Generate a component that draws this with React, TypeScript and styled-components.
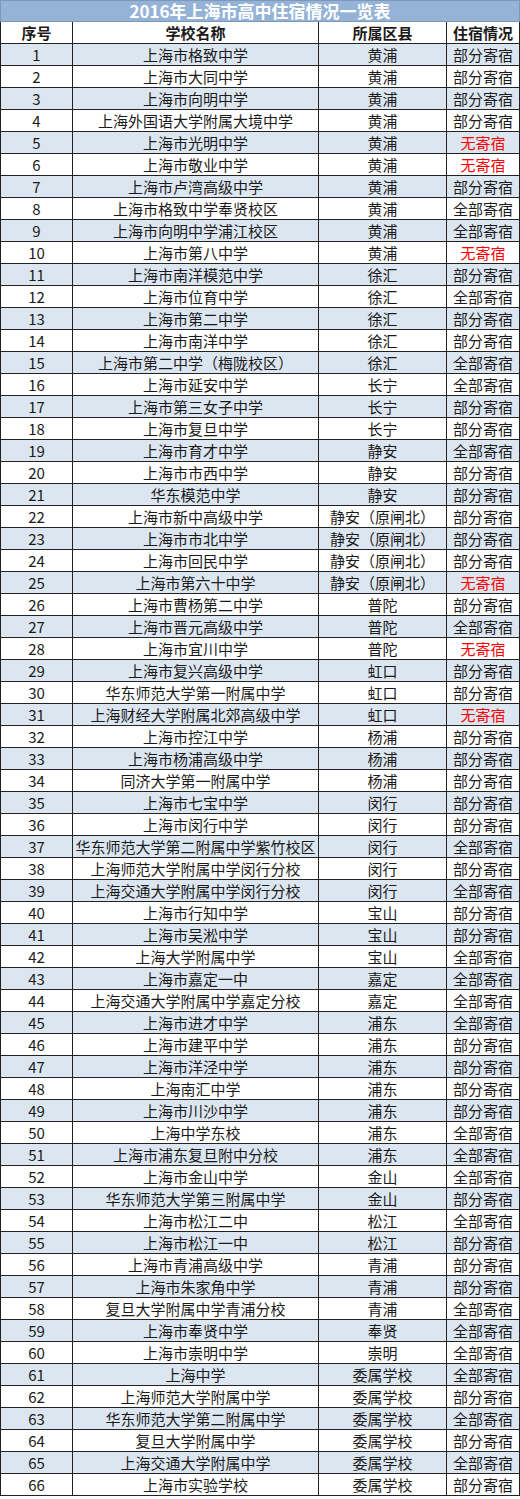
import React from "react";
import styled, { createGlobalStyle } from "styled-components";

const GlobalStyle = createGlobalStyle`
  html, body {
    margin: 0;
    padding: 0;
    background: #ffffff;
  }
  body {
    font-family: "Noto Sans CJK SC", "Noto Sans", sans-serif;
  }
`;

const Table = styled.table`
  width: 519px;
  border-collapse: collapse;
  table-layout: fixed;
  font-size: 15px;
  color: #1a1a1a;
`;

const TitleCell = styled.th`
  height: 20px;
  padding: 0;
  background: #95b3d7;
  border: 1px solid #7f98b8;
  color: #ffffff;
  font-size: 17px;
  font-weight: 700;
  line-height: 20px;
  text-align: center;
`;

const Row = styled.tr<{ $shaded?: boolean }>`
  height: 22px;
  background: ${({ $shaded }) => ($shaded ? "#dce6f1" : "#ffffff")};
`;

const HeadCell = styled.th`
  padding: 0;
  border: 1px solid #222;
  font-weight: 700;
  line-height: 20px;
  text-align: center;
  white-space: nowrap;
`;

const Cell = styled.td<{ $alert?: boolean }>`
  padding: 0;
  border: 1px solid #222;
  line-height: 20px;
  text-align: center;
  white-space: nowrap;
  overflow: hidden;
  color: ${({ $alert }) => ($alert ? "#ff0000" : "#1a1a1a")};
`;

type School = [string, string, string];

const schools: School[] = [
  ["上海市格致中学", "黄浦", "部分寄宿"],
  ["上海市大同中学", "黄浦", "部分寄宿"],
  ["上海市向明中学", "黄浦", "部分寄宿"],
  ["上海外国语大学附属大境中学", "黄浦", "部分寄宿"],
  ["上海市光明中学", "黄浦", "无寄宿"],
  ["上海市敬业中学", "黄浦", "无寄宿"],
  ["上海市卢湾高级中学", "黄浦", "部分寄宿"],
  ["上海市格致中学奉贤校区", "黄浦", "全部寄宿"],
  ["上海市向明中学浦江校区", "黄浦", "全部寄宿"],
  ["上海市第八中学", "黄浦", "无寄宿"],
  ["上海市南洋模范中学", "徐汇", "部分寄宿"],
  ["上海市位育中学", "徐汇", "全部寄宿"],
  ["上海市第二中学", "徐汇", "部分寄宿"],
  ["上海市南洋中学", "徐汇", "部分寄宿"],
  ["上海市第二中学（梅陇校区）", "徐汇", "全部寄宿"],
  ["上海市延安中学", "长宁", "全部寄宿"],
  ["上海市第三女子中学", "长宁", "部分寄宿"],
  ["上海市复旦中学", "长宁", "部分寄宿"],
  ["上海市育才中学", "静安", "全部寄宿"],
  ["上海市市西中学", "静安", "部分寄宿"],
  ["华东模范中学", "静安", "部分寄宿"],
  ["上海市新中高级中学", "静安（原闸北）", "部分寄宿"],
  ["上海市市北中学", "静安（原闸北）", "部分寄宿"],
  ["上海市回民中学", "静安（原闸北）", "部分寄宿"],
  ["上海市第六十中学", "静安（原闸北）", "无寄宿"],
  ["上海市曹杨第二中学", "普陀", "部分寄宿"],
  ["上海市晋元高级中学", "普陀", "全部寄宿"],
  ["上海市宜川中学", "普陀", "无寄宿"],
  ["上海市复兴高级中学", "虹口", "部分寄宿"],
  ["华东师范大学第一附属中学", "虹口", "部分寄宿"],
  ["上海财经大学附属北郊高级中学", "虹口", "无寄宿"],
  ["上海市控江中学", "杨浦", "部分寄宿"],
  ["上海市杨浦高级中学", "杨浦", "部分寄宿"],
  ["同济大学第一附属中学", "杨浦", "部分寄宿"],
  ["上海市七宝中学", "闵行", "部分寄宿"],
  ["上海市闵行中学", "闵行", "部分寄宿"],
  ["华东师范大学第二附属中学紫竹校区", "闵行", "全部寄宿"],
  ["上海师范大学附属中学闵行分校", "闵行", "部分寄宿"],
  ["上海交通大学附属中学闵行分校", "闵行", "全部寄宿"],
  ["上海市行知中学", "宝山", "部分寄宿"],
  ["上海市吴淞中学", "宝山", "部分寄宿"],
  ["上海大学附属中学", "宝山", "全部寄宿"],
  ["上海市嘉定一中", "嘉定", "全部寄宿"],
  ["上海交通大学附属中学嘉定分校", "嘉定", "全部寄宿"],
  ["上海市进才中学", "浦东", "全部寄宿"],
  ["上海市建平中学", "浦东", "部分寄宿"],
  ["上海市洋泾中学", "浦东", "部分寄宿"],
  ["上海南汇中学", "浦东", "部分寄宿"],
  ["上海市川沙中学", "浦东", "部分寄宿"],
  ["上海中学东校", "浦东", "全部寄宿"],
  ["上海市浦东复旦附中分校", "浦东", "全部寄宿"],
  ["上海市金山中学", "金山", "全部寄宿"],
  ["华东师范大学第三附属中学", "金山", "部分寄宿"],
  ["上海市松江二中", "松江", "全部寄宿"],
  ["上海市松江一中", "松江", "部分寄宿"],
  ["上海市青浦高级中学", "青浦", "部分寄宿"],
  ["上海市朱家角中学", "青浦", "部分寄宿"],
  ["复旦大学附属中学青浦分校", "青浦", "全部寄宿"],
  ["上海市奉贤中学", "奉贤", "全部寄宿"],
  ["上海市崇明中学", "崇明", "全部寄宿"],
  ["上海中学", "委属学校", "全部寄宿"],
  ["上海师范大学附属中学", "委属学校", "部分寄宿"],
  ["华东师范大学第二附属中学", "委属学校", "全部寄宿"],
  ["复旦大学附属中学", "委属学校", "部分寄宿"],
  ["上海交通大学附属中学", "委属学校", "全部寄宿"],
  ["上海市实验学校", "委属学校", "部分寄宿"],
];

export default function App() {
  return (
    <>
      <GlobalStyle />
      <Table>
        <colgroup>
          <col style={{ width: 72 }} />
          <col style={{ width: 246 }} />
          <col style={{ width: 128 }} />
          <col style={{ width: 73 }} />
        </colgroup>
        <thead>
          <tr>
            <TitleCell colSpan={4}>2016年上海市高中住宿情况一览表</TitleCell>
          </tr>
          <Row>
            <HeadCell>序号</HeadCell>
            <HeadCell>学校名称</HeadCell>
            <HeadCell>所属区县</HeadCell>
            <HeadCell>住宿情况</HeadCell>
          </Row>
        </thead>
        <tbody>
          {schools.map(([name, district, stay], i) => (
            <Row key={name} $shaded={i % 2 === 0}>
              <Cell>{i + 1}</Cell>
              <Cell>{name}</Cell>
              <Cell>{district}</Cell>
              <Cell $alert={stay === "无寄宿"}>{stay}</Cell>
            </Row>
          ))}
        </tbody>
      </Table>
    </>
  );
}
